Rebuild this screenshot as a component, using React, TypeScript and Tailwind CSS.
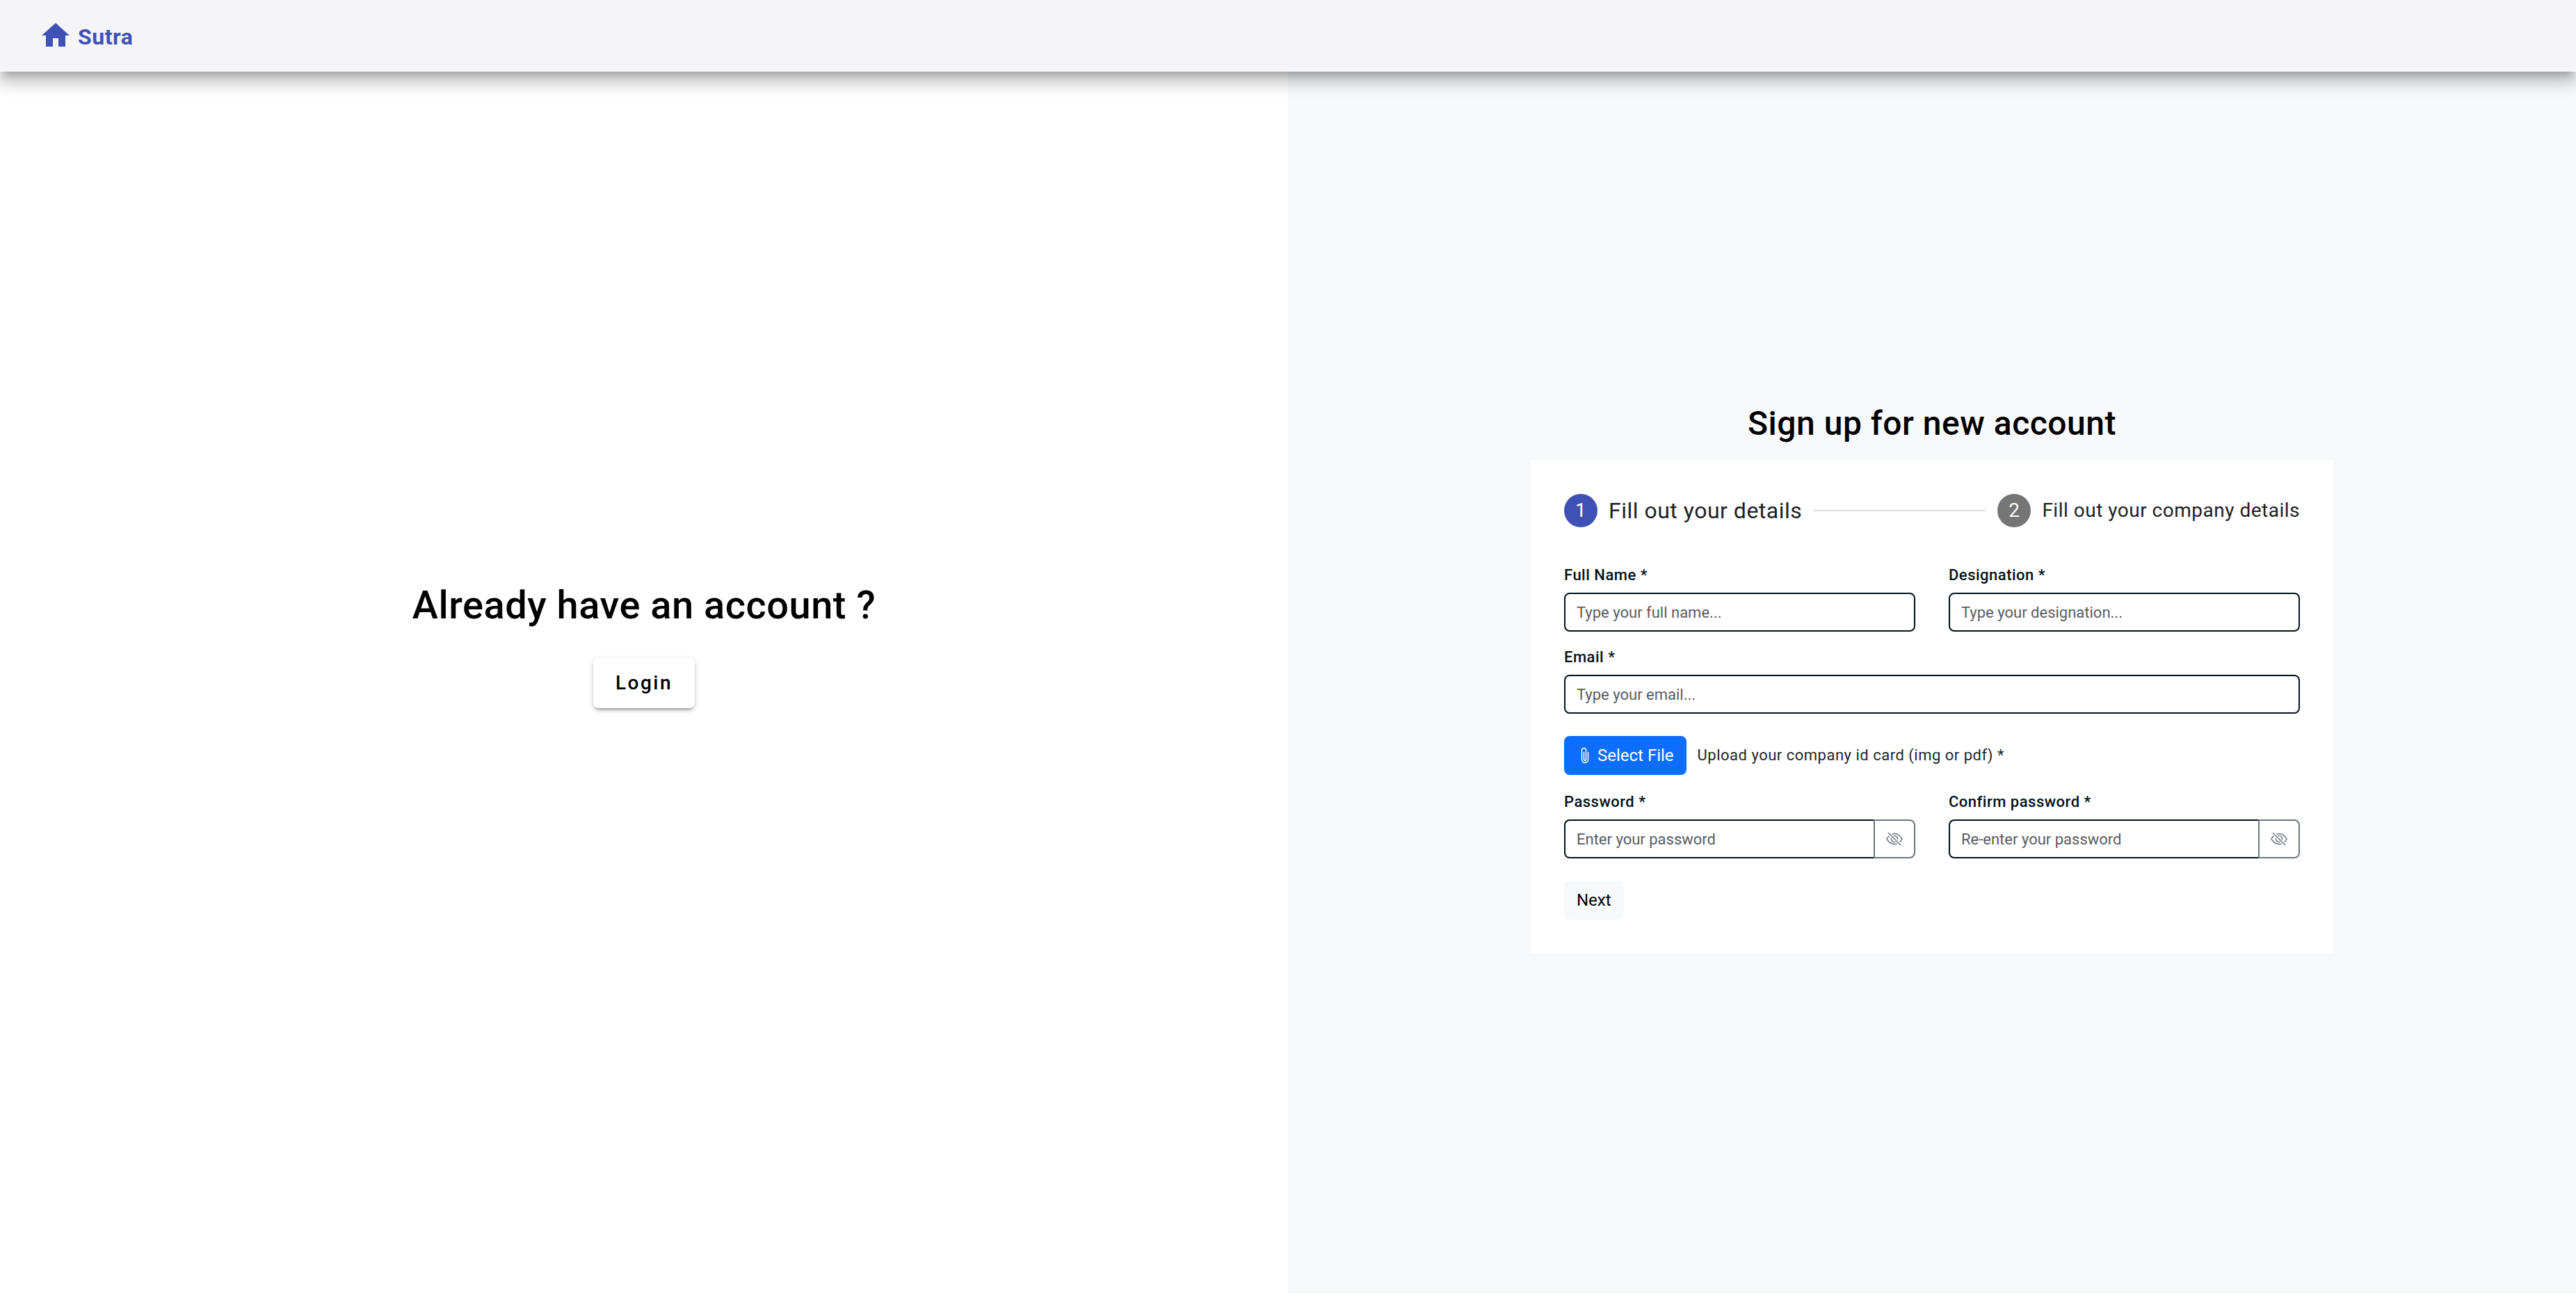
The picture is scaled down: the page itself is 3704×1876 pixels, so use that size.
import { useId } from "react";
import { MdHome } from "react-icons/md";
import { BsEyeSlash, BsPaperclip } from "react-icons/bs";

const labelStyle = "text-[22px] leading-[34px] font-medium text-[#001219]";
const inputStyle =
  "h-14 w-full min-w-0 border-2 border-[#001219] bg-white px-4 text-[22px] tracking-normal text-[#212529] outline-none placeholder:text-[#595c5f]";

type FieldProps = { label: string; placeholder: string; type?: string };

function Field({ label, placeholder, type = "text" }: FieldProps) {
  const id = useId();
  return (
    <div className="flex flex-col gap-2">
      <label htmlFor={id} className={labelStyle}>
        {label}
      </label>
      <input id={id} type={type} placeholder={placeholder} className={`${inputStyle} rounded-lg`} />
    </div>
  );
}

function PasswordField({ label, placeholder }: FieldProps) {
  const id = useId();
  return (
    <div className="flex flex-col gap-2">
      <label htmlFor={id} className={labelStyle}>
        {label}
      </label>
      <div className="flex">
        <input
          id={id}
          type="password"
          placeholder={placeholder}
          className={`${inputStyle} flex-1 rounded-l-lg border-r-0`}
        />
        <button
          type="button"
          aria-label="Show password"
          className="flex h-14 shrink-0 items-center rounded-r-lg border-2 border-[#6c757d] px-4 text-[#6c757d]"
        >
          <BsEyeSlash className="size-6" />
        </button>
      </div>
    </div>
  );
}

export default function App() {
  return (
    <div className="min-h-screen bg-white font-[Roboto,sans-serif] text-xl tracking-wide text-black">
      <header className="relative z-10 flex h-[103px] items-center bg-[#f5f5f8] px-14 pt-0.5 shadow-[0_10px_10px_-6px_rgba(0,0,0,0.2),0_16px_20px_2px_rgba(0,0,0,0.14),0_6px_28px_4px_rgba(0,0,0,0.12)]">
        <a href="#" className="flex items-center gap-2 text-[32px] leading-10 font-bold text-[#3f51b5]">
          <MdHome className="mb-1 size-12" />
          <span>Sutra</span>
        </a>
      </header>

      <main className="grid min-h-[calc(100vh-120px)] grid-cols-2">
        <section className="flex flex-col items-center justify-center gap-10 pb-[110px]">
          <h1 className="text-[56px] leading-[72px] font-medium">Already have an account ?</h1>
          <button
            type="button"
            className="h-[72px] rounded-lg bg-white px-8 text-[28px] font-medium tracking-[0.09em] shadow-[0_6px_2px_-4px_rgba(0,0,0,0.2),0_4px_4px_0_rgba(0,0,0,0.14),0_2px_10px_0_rgba(0,0,0,0.12)]"
          >
            Login
          </button>
        </section>

        <section className="flex flex-col items-center justify-center gap-6 bg-[#f8f9fb] pb-3">
          <h2 className="text-5xl leading-[58px] font-medium">Sign up for new account</h2>

          <form className="w-full max-w-[1154px] bg-white p-12">
            <ol className="flex items-center gap-4 text-[28px] text-[#212121]">
              <li className="flex items-center gap-4">
                <span className="flex size-12 items-center justify-center rounded-full bg-[#3f51b5] text-white">1</span>
                <span className="text-[32px]">Fill out your details</span>
              </li>
              <li aria-hidden="true" className="h-0.5 flex-1 bg-[#e0e0e0]" />
              <li className="flex items-center gap-4">
                <span className="flex size-12 items-center justify-center rounded-full bg-[#757575] text-white">2</span>
                <span>Fill out your company details</span>
              </li>
            </ol>

            <div className="mt-[52px] grid grid-cols-2 gap-x-12 gap-y-5">
              <Field label="Full Name *" placeholder="Type your full name..." />
              <Field label="Designation *" placeholder="Type your designation..." />
              <div className="col-span-2">
                <Field label="Email *" placeholder="Type your email..." type="email" />
              </div>
            </div>

            <div className="mt-8 mb-[22px] flex items-center gap-4">
              <button
                type="button"
                className="flex h-14 items-center gap-1.5 rounded-lg bg-[#0d6efd] px-[18px] text-2xl tracking-normal text-white"
              >
                <BsPaperclip className="size-6" />
                Select File
              </button>
              <span className="text-[22px] text-[#212529]">Upload your company id card (img or pdf) *</span>
            </div>

            <div className="grid grid-cols-2 gap-x-12">
              <PasswordField label="Password *" placeholder="Enter your password" />
              <PasswordField label="Confirm password *" placeholder="Re-enter your password" />
            </div>

            <button type="button" className="mt-8 block h-14 rounded-lg bg-[#f8f9fa] px-[18px] text-2xl tracking-normal">
              Next
            </button>
          </form>
        </section>
      </main>
    </div>
  );
}
